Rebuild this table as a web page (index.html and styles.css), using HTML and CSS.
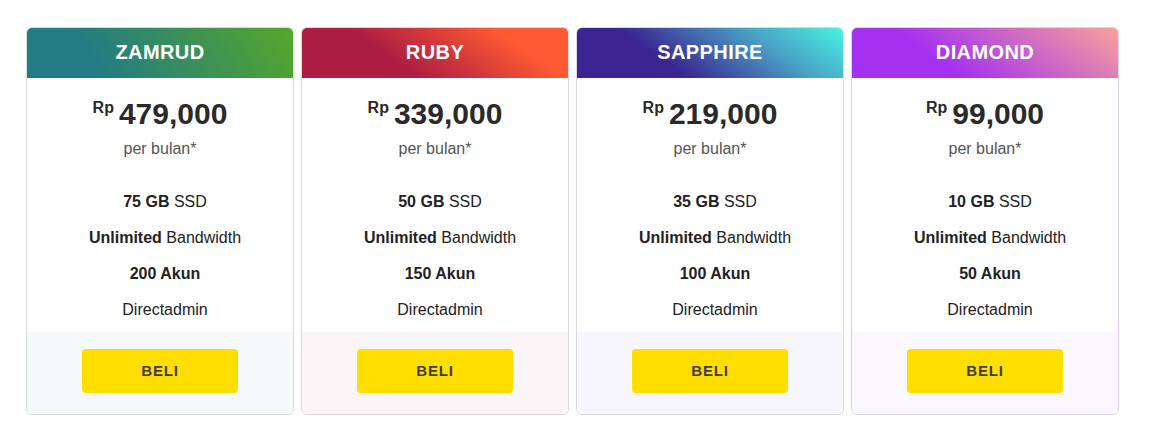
FILE: index.html
```html
<!DOCTYPE html>
<html lang="id">
<head>
<meta charset="utf-8">
<title>Paket Hosting</title>
<link rel="stylesheet" href="styles.css">
</head>
<body>
<div class="plans">
  <div class="card zamrud">
    <div class="head">ZAMRUD</div>
    <div class="body">
      <div class="price"><span class="cur">Rp</span><span class="amt">479,000</span></div>
      <div class="per">per bulan*</div>
      <ul class="feats">
        <li><b>75 GB</b> SSD</li>
        <li><b>Unlimited</b> Bandwidth</li>
        <li><b>200 Akun</b></li>
        <li>Directadmin</li>
      </ul>
    </div>
    <div class="foot"><a class="btn" href="#">BELI</a></div>
  </div>
  <div class="card ruby">
    <div class="head">RUBY</div>
    <div class="body">
      <div class="price"><span class="cur">Rp</span><span class="amt">339,000</span></div>
      <div class="per">per bulan*</div>
      <ul class="feats">
        <li><b>50 GB</b> SSD</li>
        <li><b>Unlimited</b> Bandwidth</li>
        <li><b>150 Akun</b></li>
        <li>Directadmin</li>
      </ul>
    </div>
    <div class="foot"><a class="btn" href="#">BELI</a></div>
  </div>
  <div class="card sapphire">
    <div class="head">SAPPHIRE</div>
    <div class="body">
      <div class="price"><span class="cur">Rp</span><span class="amt">219,000</span></div>
      <div class="per">per bulan*</div>
      <ul class="feats">
        <li><b>35 GB</b> SSD</li>
        <li><b>Unlimited</b> Bandwidth</li>
        <li><b>100 Akun</b></li>
        <li>Directadmin</li>
      </ul>
    </div>
    <div class="foot"><a class="btn" href="#">BELI</a></div>
  </div>
  <div class="card diamond">
    <div class="head">DIAMOND</div>
    <div class="body">
      <div class="price"><span class="cur">Rp</span><span class="amt">99,000</span></div>
      <div class="per">per bulan*</div>
      <ul class="feats">
        <li><b>10 GB</b> SSD</li>
        <li><b>Unlimited</b> Bandwidth</li>
        <li><b>50 Akun</b></li>
        <li>Directadmin</li>
      </ul>
    </div>
    <div class="foot"><a class="btn" href="#">BELI</a></div>
  </div>
</div>
</body>
</html>
```

FILE: styles.css
```css
* { box-sizing: border-box; }
body {
  margin: 0;
  background: #fff;
  font-family: "Liberation Sans", Arial, sans-serif;
  color: #222;
}
.plans {
  display: flex;
  gap: 7px;
  padding: 27px 0 0 26px;
}
.card {
  width: 268px;
  border: 1px solid #dcdcdc;
  border-radius: 6px;
  overflow: hidden;
  display: flex;
  flex-direction: column;
  background: #fff;
}
.head {
  height: 50px;
  line-height: 49px;
  text-align: center;
  color: #fff;
  font-weight: bold;
  font-size: 20px;
  letter-spacing: 0.4px;
}
.zamrud .head { background: linear-gradient(60deg, #237b84 25%, #55a72a 100%); }
.ruby .head { background: linear-gradient(35deg, #ad1d42 35%, #ff5a33 78%); }
.sapphire .head { background: linear-gradient(35deg, #3b2591 33%, #4aa0c4 70%, #48f3e3 100%); }
.diamond .head { background: linear-gradient(35deg, #a431f0 33%, #f8a39a 100%); }
.zamrud { border-color: #d8dcdd; }
.ruby { border-color: #e0d6da; }
.sapphire { border-color: #dad8e2; }
.diamond { border-color: #ddd3e4; }
.body {
  text-align: center;
  padding-top: 18px;
  padding-bottom: 4px;
}
.price {
  display: flex;
  justify-content: center;
  align-items: flex-start;
  height: 36px;
  color: #2a2a2a;
}
.cur {
  font-size: 16px;
  font-weight: bold;
  margin-top: 3px;
  margin-right: 5px;
}
.amt {
  font-size: 30px;
  font-weight: bold;
  line-height: 36px;
}
.per {
  margin-top: 5px;
  font-size: 16px;
  line-height: 24px;
  color: #555;
}
.feats {
  list-style: none;
  margin: 23px 0 0;
  padding: 0 0 0 10px;
  font-size: 16px;
  line-height: 36px;
  color: #222;
}
.feats b { font-weight: bold; }
.foot {
  padding: 17px 0 21px;
  display: flex;
  justify-content: center;
}
.zamrud .foot { background: #f5f9f9; }
.ruby .foot { background: #faf5f7; }
.sapphire .foot { background: #f7f6fc; }
.diamond .foot { background: #fbf7fe; }
.btn {
  display: block;
  width: 156px;
  height: 44px;
  line-height: 43px;
  background: #ffde00;
  border-radius: 4px;
  text-align: center;
  text-decoration: none;
  color: #3e3e3e;
  font-weight: bold;
  font-size: 15px;
  letter-spacing: 0.8px;
}
```
